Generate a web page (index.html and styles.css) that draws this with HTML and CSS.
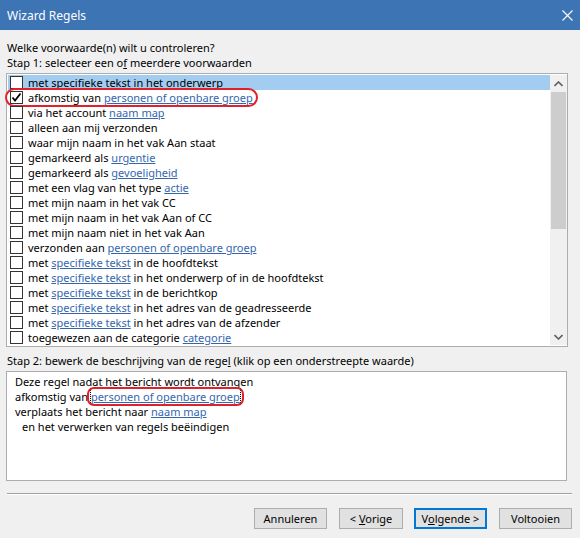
FILE: index.html
```html
<!DOCTYPE html>
<html lang="nl">
<head>
    <meta charset="UTF-8">
    <title>Wizard Regels</title>
    <link rel="stylesheet" href="styles.css">
</head>
<body>

<div class="titlebar">
    <span class="title">Wizard Regels</span>
    <svg class="close" width="11" height="11" viewBox="0 0 11 11">
        <path d="M0.5 0.5 L10.5 10.5 M10.5 0.5 L0.5 10.5" stroke="#fff" stroke-width="1.1" fill="none"/>
    </svg>
</div>

<div class="content">
    <p class="line first">Welke voorwaarde(n) wilt u controleren?</p>
    <p class="line">Stap 1: selecteer een o<u>f</u> meerdere voorwaarden</p>

    <div class="listbox">
        <div class="rows">
            <div class="row selected"><span class="box"></span><span class="label">met <u>specifieke tekst</u> in het onderwerp</span></div>
            <div class="row marked">
                <span class="box">
                    <svg width="11" height="11" viewBox="0 0 11 11"><path d="M1.5 5.5 L4 8.5 L9.5 1.5" stroke="#000" stroke-width="1.8" fill="none"/></svg>
                </span><span class="label">afkomstig van <a>personen of openbare groep</a></span>
                <span class="ring ring-list"></span>
            </div>
            <div class="row"><span class="box"></span><span class="label">via het account <a>naam map</a></span></div>
            <div class="row"><span class="box"></span><span class="label">alleen aan mij verzonden</span></div>
            <div class="row"><span class="box"></span><span class="label">waar mijn naam in het vak Aan staat</span></div>
            <div class="row"><span class="box"></span><span class="label">gemarkeerd als <a>urgentie</a></span></div>
            <div class="row"><span class="box"></span><span class="label">gemarkeerd als <a>gevoeligheid</a></span></div>
            <div class="row"><span class="box"></span><span class="label">met een vlag van het type <a>actie</a></span></div>
            <div class="row"><span class="box"></span><span class="label">met mijn naam in het vak CC</span></div>
            <div class="row"><span class="box"></span><span class="label">met mijn naam in het vak Aan of CC</span></div>
            <div class="row"><span class="box"></span><span class="label">met mijn naam niet in het vak Aan</span></div>
            <div class="row"><span class="box"></span><span class="label">verzonden aan <a>personen of openbare groep</a></span></div>
            <div class="row"><span class="box"></span><span class="label">met <a>specifieke tekst</a> in de hoofdtekst</span></div>
            <div class="row"><span class="box"></span><span class="label">met <a>specifieke tekst</a> in het onderwerp of in de hoofdtekst</span></div>
            <div class="row"><span class="box"></span><span class="label">met <a>specifieke tekst</a> in de berichtkop</span></div>
            <div class="row"><span class="box"></span><span class="label">met <a>specifieke tekst</a> in het adres van de geadresseerde</span></div>
            <div class="row"><span class="box"></span><span class="label">met <a>specifieke tekst</a> in het adres van de afzender</span></div>
            <div class="row"><span class="box"></span><span class="label">toegewezen aan de categorie <a>categorie</a></span></div>
        </div>
        <div class="scrollbar">
            <div class="arrow">
                <svg width="9" height="6" viewBox="0 0 9 6"><path d="M0.5 5 L4.5 1 L8.5 5" stroke="#606060" stroke-width="1.6" fill="none"/></svg>
            </div>
            <div class="thumb"></div>
            <div class="track"></div>
            <div class="arrow">
                <svg width="9" height="6" viewBox="0 0 9 6"><path d="M0.5 1 L4.5 5 L8.5 1" stroke="#606060" stroke-width="1.6" fill="none"/></svg>
            </div>
        </div>
    </div>

    <p class="line step2">Stap 2: bewerk de beschrijving van de rege<u>l</u> (klik op een onderstreepte waarde)</p>

    <div class="description">
        <div class="line">Deze regel nadat het bericht wordt ontvangen</div>
        <div class="line">afkomstig van <span class="value"><a class="focused">personen of openbare groep</a><span class="ring ring-desc"></span></span></div>
        <div class="line">verplaats het bericht naar <a>naam map</a></div>
        <div class="line indent">en het verwerken van regels beëindigen</div>
    </div>

    <div class="separator"></div>

    <div class="buttons">
        <button class="btn">Annuleren</button>
        <button class="btn narrow">&lt; <u>V</u>orige</button>
        <button class="btn default">V<u>o</u>lgende &gt;</button>
        <button class="btn">Voltooien</button>
    </div>
</div>

</body>
</html>
```

FILE: styles.css
```css
body {
    margin: 0;
    background: #f0f0f0;
    font-family: "Noto Sans", "Liberation Sans", sans-serif;
    font-size: 11px;
    color: #000;
    width: 580px;
    height: 538px;
    overflow: hidden;
}

/* window caption */
.titlebar {
    height: 30px;
    background: #3c74b4;
    color: #fff;
    display: flex;
    align-items: center;
    justify-content: space-between;
    padding: 0 7px;
    font-size: 12px;
}

.content { padding: 0 6px; }

.line {
    margin: 0;
    height: 15px;
    line-height: 15px;
    white-space: nowrap;
}
.first { margin-top: 10px; }
.content > .line { padding-left: 1px; }

a {
    color: #3466ae;
    text-decoration: underline;
}

/* conditions list */
.listbox {
    margin-top: 3px;
    width: 559px;
    height: 270px;
    border: 1px solid #adadad;
    background: #fff;
    display: flex;
    padding: 1px 0 1px 1px;
}
.rows { flex: 1; }
.row {
    position: relative;
    height: 15px;
    line-height: 15px;
    display: flex;
    align-items: center;
    white-space: nowrap;
}
.row.selected { background: #a3cdf0; }
.box {
    width: 11px;
    height: 11px;
    border: 1px solid #333;
    background: #fff;
    margin: 0 5px 0 2px;
    display: flex;
    align-items: center;
    justify-content: center;
    flex: none;
}

.scrollbar {
    width: 17px;
    background: #f0f0f0;
    display: flex;
    flex-direction: column;
    align-items: center;
}
.arrow {
    height: 17px;
    width: 17px;
    display: flex;
    align-items: center;
    justify-content: center;
}
.thumb {
    width: 15px;
    height: 137px;
    background: #cdcdcd;
}
.track { flex: 1; }

/* red annotation rings */
.ring {
    position: absolute;
    border: 2px solid #e0202a;
    border-radius: 10px;
    pointer-events: none;
}
.ring-list {
    left: -3px;
    top: -2px;
    width: 249px;
    height: 15px;
}
.value { position: relative; }
.ring-desc {
    left: -4px;
    right: -4px;
    top: -2px;
    bottom: -2px;
    border-radius: 7px;
}
.focused { outline: 1px dotted #000; }

.step2 { margin-top: 6px; }

.description {
    margin-top: 3px;
    width: 551px;
    height: 106px;
    border: 1px solid #adadad;
    background: #fff;
    padding: 2px 0 0 8px;
}
.indent { padding-left: 7px; }

.separator {
    margin: 12px 2px 0 1px;
    height: 1px;
    background: #a0a0a0;
    border-bottom: 1px solid #fff;
}

.buttons {
    display: flex;
    justify-content: flex-end;
    gap: 12px;
    margin-top: 13px;
    padding-right: 2px;
}
.btn {
    width: 73px;
    height: 21px;
    background: #e1e1e1;
    border: 1px solid #adadad;
    font-family: inherit;
    font-size: 11px;
    color: #000;
    padding: 0;
}
.btn.narrow { width: 64px; margin-right: -1px; }
.btn.default { border: 2px solid #0078d7; }
```
